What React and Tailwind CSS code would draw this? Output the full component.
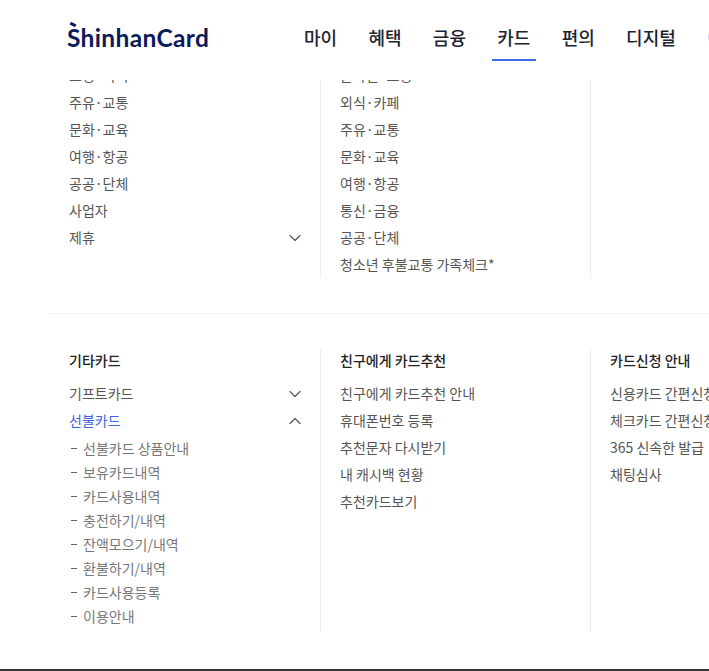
import React from 'react';
import { ChevronDown, ChevronUp } from 'lucide-react';

const FONT = "font-['Noto_Sans_CJK_KR','Noto_Sans',sans-serif]";

const NAV = ['마이', '혜택', '금융', '카드', '편의', '디지털'];

const TOP_LEFT = ['쇼핑·외식', '주유·교통', '문화·교육', '여행·항공', '공공·단체', '사업자', '제휴'];
const TOP_MID = ['온라인·쇼핑', '외식·카페', '주유·교통', '문화·교육', '여행·항공', '통신·금융', '공공·단체', '청소년 후불교통 가족체크*'];

const PREPAID = ['선불카드 상품안내', '보유카드내역', '카드사용내역', '충전하기/내역', '잔액모으기/내역', '환불하기/내역', '카드사용등록', '이용안내'];
const FRIEND = ['친구에게 카드추천 안내', '휴대폰번호 등록', '추천문자 다시받기', '내 캐시백 현황', '추천카드보기'];
const APPLY = ['신용카드 간편신청', '체크카드 간편신청', '365 신속한 발급', '채팅심사'];

const Row = ({ children, icon, active }) => (
  <li className={`flex h-[27px] items-center justify-between whitespace-nowrap text-[14px] ${active ? 'text-[#3f66e0]' : 'text-[#555555]'}`}>
    <span>{children}</span>
    {icon}
  </li>
);

const Title = ({ children }) => (
  <h3 className="mb-[9px] flex h-[22px] items-center whitespace-nowrap text-[14px] font-medium text-[#222222]">{children}</h3>
);

const App = () => {
  return (
    <div className={`flex h-screen w-full flex-col overflow-hidden bg-white ${FONT}`}>
      {/* header */}
      <header className="flex h-20 shrink-0 items-start overflow-hidden">
        <div className="relative ml-[67px] mt-[23px] w-[237px] shrink-0">
          <span className="absolute left-[3px] top-[0px] h-[3px] w-[6px] rotate-[25deg] bg-[#0b1a59]"></span>
          <span className="font-['Lato',sans-serif] text-[24.5px] font-bold leading-[30px] tracking-[0.35px] text-[#0b1a59]">ShinhanCard</span>
        </div>
        <nav className="mt-[22px] flex shrink-0 gap-[20.3px] -ml-[5.5px]">
          {NAV.map((label) => (
            <a
              key={label}
              className={`flex h-[39px] items-start justify-center whitespace-nowrap border-b-2 px-[5.5px] text-[18px] font-medium leading-[30px] text-[#1c2430] ${label === '카드' ? 'border-[#4169e1]' : 'border-transparent'}`}
            >
              {label}
            </a>
          ))}
          <a className="whitespace-nowrap px-[5.5px] text-[18px] font-medium leading-[30px] text-[#5bb8f0]">이벤트</a>
        </nav>
      </header>

      {/* menu, scrolled under the header */}
      <div className="min-h-0 flex-1 overflow-hidden">
        <div className="ml-[49px] w-[900px]">
          <section className="flex overflow-hidden border-b border-[#f0f0f0] pb-[35px]">
            <div className="w-[271px] shrink-0 pl-5 pr-[15px]">
              <ul className="-mt-[18px]">
                {TOP_LEFT.map((t) => (
                  <Row key={t} icon={t === '제휴' ? <ChevronDown size={20} strokeWidth={1.4} className="text-[#555555]" /> : null}>{t}</Row>
                ))}
              </ul>
            </div>
            <div className="h-[198px] w-[270px] shrink-0 border-l border-[#eeeeee] pl-[19px]">
              <ul className="-mt-[18px]">
                {TOP_MID.map((t) => <Row key={t}>{t}</Row>)}
              </ul>
            </div>
            <div className="h-[198px] w-[270px] shrink-0 border-l border-[#eeeeee]"></div>
          </section>

          <section className="mt-[35px] flex">
            <div className="w-[271px] shrink-0 pl-5 pr-[15px]">
              <Title>기타카드</Title>
              <ul>
                <Row icon={<ChevronDown size={20} strokeWidth={1.4} className="text-[#555555]" />}>기프트카드</Row>
                <Row active icon={<ChevronUp size={20} strokeWidth={1.4} className="text-[#555555]" />}>선불카드</Row>
              </ul>
              <ul className="mt-[2.5px]">
                {PREPAID.map((t) => (
                  <li key={t} className="flex h-6 items-center whitespace-nowrap text-[14px] text-[#777777]">
                    <span className="ml-[2px] mr-[6px] h-px w-[6px] bg-[#666666]"></span>
                    {t}
                  </li>
                ))}
              </ul>
            </div>
            <div className="h-[283px] w-[270px] shrink-0 border-l border-[#eeeeee] pl-[19px]">
              <Title>친구에게 카드추천</Title>
              <ul>
                {FRIEND.map((t) => <Row key={t}>{t}</Row>)}
              </ul>
            </div>
            <div className="h-[283px] w-[270px] shrink-0 border-l border-[#eeeeee] pl-[19px]">
              <Title>카드신청 안내</Title>
              <ul>
                {APPLY.map((t) => <Row key={t}>{t}</Row>)}
              </ul>
            </div>
          </section>
        </div>
      </div>

      {/* bottom edge */}
      <div className="h-[2px] shrink-0 bg-[#333333]"></div>
    </div>
  );
};

export default App;
